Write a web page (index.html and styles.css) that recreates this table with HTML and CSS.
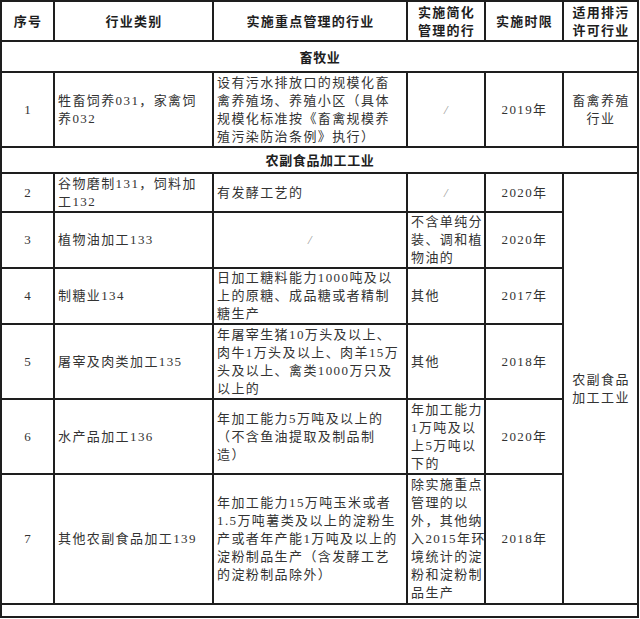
FILE: index.html
```html
<!DOCTYPE html>
<html lang="zh-CN">
<head>
<meta charset="utf-8">
<title>排污许可行业表</title>
<link rel="stylesheet" href="styles.css">
</head>
<body>
<table class="grid">
  <colgroup>
    <col class="c1"><col class="c2"><col class="c3"><col class="c4"><col class="c5"><col class="c6">
  </colgroup>
  <tr class="hdr">
    <th>序号</th>
    <th>行业类别</th>
    <th>实施重点管理的行业</th>
    <th>实施简化<br>管理的行</th>
    <th>实施时限</th>
    <th>适用排污<br>许可行业</th>
  </tr>
  <tr class="sec1">
    <td colspan="6" class="sec">畜牧业</td>
  </tr>
  <tr class="r75">
    <td class="num">1</td>
    <td>牲畜饲养031，家禽饲<br>养032</td>
    <td>设有污水排放口的规模化畜<br>禽养殖场、养殖小区（具体<br>规模化标准按《畜禽规模养<br>殖污染防治条例》执行）</td>
    <td class="slash">/</td>
    <td class="ctr">2019年</td>
    <td class="ctr">畜禽养殖<br>行业</td>
  </tr>
  <tr class="sec2">
    <td colspan="6" class="sec">农副食品加工工业</td>
  </tr>
  <tr class="r39">
    <td class="num">2</td>
    <td>谷物磨制131，饲料加<br>工132</td>
    <td>有发酵工艺的</td>
    <td class="slash">/</td>
    <td class="ctr">2020年</td>
    <td class="ctr" rowspan="6">农副食品<br>加工工业</td>
  </tr>
  <tr class="r56">
    <td class="num">3</td>
    <td>植物油加工133</td>
    <td class="slash">/</td>
    <td>不含单纯分<br>装、调和植<br>物油的</td>
    <td class="ctr">2020年</td>
  </tr>
  <tr class="r56">
    <td class="num">4</td>
    <td>制糖业134</td>
    <td>日加工糖料能力1000吨及以<br>上的原糖、成品糖或者精制<br>糖生产</td>
    <td>其他</td>
    <td class="ctr">2017年</td>
  </tr>
  <tr class="r75">
    <td class="num">5</td>
    <td>屠宰及肉类加工135</td>
    <td>年屠宰生猪10万头及以上、<br>肉牛1万头及以上、肉羊15万<br>头及以上、禽类1000万只及<br>以上的</td>
    <td>其他</td>
    <td class="ctr">2018年</td>
  </tr>
  <tr class="r75">
    <td class="num">6</td>
    <td>水产品加工136</td>
    <td>年加工能力5万吨及以上的<br>（不含鱼油提取及制品制<br>造）</td>
    <td>年加工能力<br>1万吨及以<br>上5万吨以<br>下的</td>
    <td class="ctr">2020年</td>
  </tr>
  <tr class="r130">
    <td class="num">7</td>
    <td>其他农副食品加工139</td>
    <td>年加工能力15万吨玉米或者<br>1.5万吨薯类及以上的淀粉生<br>产或者年产能1万吨及以上的<br>淀粉制品生产（含发酵工艺<br>的淀粉制品除外）</td>
    <td>除实施重点<br>管理的以<br>外，其他纳<br>入2015年环<br>境统计的淀<br>粉和淀粉制<br>品生产</td>
    <td class="ctr">2018年</td>
  </tr>
  <tr class="last">
    <td colspan="6"></td>
  </tr>
</table>
</body>
</html>
```

FILE: styles.css
```css
html, body {
  margin: 0;
  padding: 0;
  background: #ffffff;
}

.grid {
  border-collapse: collapse;
  table-layout: fixed;
  width: 638px;
  margin: 0;
  font-family: "Liberation Serif", "Noto Sans CJK SC", serif;
  font-size: 13px;
  line-height: 18px;
  color: #333333;
  letter-spacing: 1.4px;
}

.c1 { width: 53px; }
.c2 { width: 159px; }
.c3 { width: 194px; }
.c4 { width: 78px; }
.c5 { width: 78px; }
.c6 { width: 75px; }

.grid th,
.grid td {
  border: 2px solid #1e1e1e;
  padding: 0 2px 0 3px;
  vertical-align: middle;
  text-align: left;
  overflow: hidden;
  white-space: nowrap;
}

.grid th {
  font-family: "Noto Sans CJK SC", sans-serif;
  font-weight: 700;
  text-align: center;
  color: #1e1e1e;
  letter-spacing: 1.2px;
  line-height: 18px;
}

.hdr { height: 40px; }
.sec1 { height: 31px; }
.sec2 { height: 26px; }
.r39 { height: 39px; }
.r56 { height: 56px; }
.r75 { height: 75px; }
.r130 { height: 130px; }
.last { height: 13px; }

.grid td.sec {
  font-family: "Noto Sans CJK SC", sans-serif;
  font-weight: 700;
  text-align: center;
  color: #1e1e1e;
  letter-spacing: 0.6px;
}

.grid td.num {
  text-align: center;
  padding: 0;
  letter-spacing: 0;
}

.grid td.ctr {
  text-align: center;
}

.grid td.slash {
  text-align: center;
  color: #9a9a9a;
  font-style: italic;
}
```
